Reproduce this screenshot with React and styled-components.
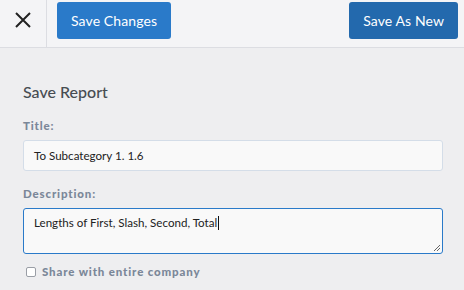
import React from 'react'
import styled, { createGlobalStyle } from 'styled-components'

const GlobalStyle = createGlobalStyle`
    html, body {
        margin: 0;
        padding: 0;
        background: #eeeef0;
        font-family: Lato, "Open Sans", sans-serif;
    }
    * { box-sizing: border-box; }
`

const Page = styled.div`
    width: 464px;
    height: 290px;
    overflow: hidden;
    background: #eeeef0;
`

const Toolbar = styled.header`
    display: flex;
    align-items: stretch;
    height: 48px;
    background: #f4f4f6;
    border-bottom: 1px solid #dcdde2;
`

const CloseButton = styled.button`
    width: 47px;
    padding: 0 0 7px;
    display: flex;
    align-items: center;
    justify-content: center;
    border: 0;
    border-right: 1px solid #dcdde2;
    background: transparent;
    color: #222;
`

const Actions = styled.div`
    flex: 1;
    display: flex;
    justify-content: space-between;
    align-items: flex-start;
    padding: 2px 6px 0 10px;
`

const Button = styled.button`
    height: 37px;
    padding: 0 14px;
    border: 0;
    border-radius: 3px;
    background: ${p => (p.$dark ? '#2369ad' : '#2a7ac9')};
    color: #fff;
    font-family: Lato, sans-serif;
    font-size: 14px;
    letter-spacing: 0.1px;
`

const Form = styled.main`
    display: flex;
    flex-direction: column;
    padding: 0 21px 0 23px;
`

const Heading = styled.h2`
    margin: 34px 0 0;
    font-size: 16px;
    font-weight: 500;
    color: #474c52;
    line-height: 20px;
`

const Label = styled.label`
    display: block;
    margin-top: ${p => p.$top || 16}px;
    font-size: 11.5px;
    font-weight: 900;
    letter-spacing: 0.85px;
    color: #7b8799;
    line-height: 14px;
`

const Input = styled.div`
    margin-top: 7px;
    height: 31px;
    display: flex;
    align-items: center;
    padding: 0 10px;
    background: #f9f9f9;
    border: 1px solid #d4dde8;
    border-radius: 3px;
    font-size: 11.6px;
    color: #222;
`

const TextArea = styled.div`
    position: relative;
    margin-top: 7px;
    height: 46px;
    padding: 7px 10px;
    background: #f9f9f9;
    border: 1px solid #2a7ac9;
    border-radius: 3px;
    font-size: 11.6px;
    color: #222;
    line-height: 14px;
`

const Caret = styled.span`
    display: inline-block;
    width: 1px;
    height: 14px;
    margin-left: 1px;
    vertical-align: -3px;
    background: #111;
`

const Grip = styled.svg`
    position: absolute;
    right: 1px;
    bottom: 1px;
`

const CheckRow = styled.label`
    display: flex;
    align-items: center;
    gap: 6px;
    margin-top: 11px;
    margin-left: 3px;
    font-size: 11.5px;
    font-weight: 900;
    letter-spacing: 0.85px;
    color: #7b8799;
`

const Box = styled.span`
    width: 10px;
    height: 10px;
    border: 1px solid #9a9ea6;
    border-radius: 2px;
    background: #fff;
`

const App = () => (
    <Page>
        <GlobalStyle />
        <Toolbar>
            <CloseButton aria-label="Close">
                <svg width="16" height="16" viewBox="0 0 16 16">
                    <path d="M1 1 L15 15 M15 1 L1 15" stroke="#222" strokeWidth="2" />
                </svg>
            </CloseButton>
            <Actions>
                <Button>Save Changes</Button>
                <Button $dark>Save As New</Button>
            </Actions>
        </Toolbar>
        <Form>
            <Heading>Save Report</Heading>
            <Label $top={17}>Title:</Label>
            <Input>To Subcategory 1. 1.6</Input>
            <Label>Description:</Label>
            <TextArea>
                Lengths of First, Slash, Second, Total
                <Caret />
                <Grip width="8" height="8" viewBox="0 0 8 8">
                    <path d="M7 1 L1 7 M7 4 L4 7" stroke="#666" strokeWidth="1" />
                </Grip>
            </TextArea>
            <CheckRow>
                <Box />
                Share with entire company
            </CheckRow>
        </Form>
    </Page>
)

export default App
